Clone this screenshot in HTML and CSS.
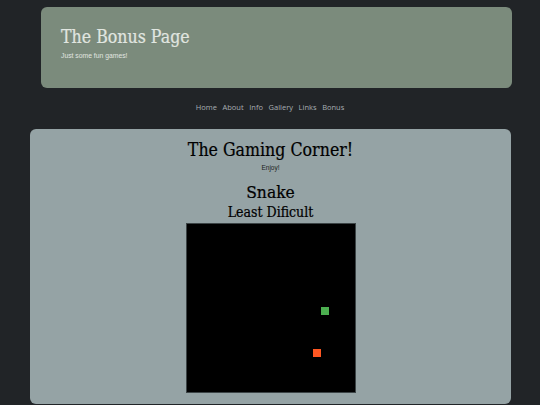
FILE: index.html
```html
<!DOCTYPE html>
<html>
<head>
<meta charset="utf-8">
<title>The Bonus Page</title>
<link rel="stylesheet" href="styles.css">
</head>
<body>
<header class="banner">
  <h1 class="banner-title">The Bonus Page</h1>
  <p class="banner-sub">Just some fun games!</p>
</header>
<nav class="nav">
  <a href="#">Home</a>
  <a href="#">About</a>
  <a href="#">Info</a>
  <a href="#">Gallery</a>
  <a href="#">Links</a>
  <a href="#">Bonus</a>
</nav>
<main class="card">
  <h2 class="card-title">The Gaming Corner!</h2>
  <p class="card-sub">Enjoy!</p>
  <h3 class="game-title">Snake</h3>
  <h4 class="game-level">Least Dificult</h4>
  <div class="board">
    <div class="cell snake" style="left:134px;top:83px"></div>
    <div class="cell food" style="left:126px;top:125px"></div>
  </div>
</main>
</body>
</html>
```
FILE: styles.css
```css
html, body {
  margin: 0;
  padding: 0;
  background: #212427;
  height: 405px;
  overflow: hidden;
}
body {
  font-family: "Liberation Sans", Arial, sans-serif;
}
.serif {
  font-family: "DejaVu Serif Condensed", "DejaVu Serif", serif;
}
.banner {
  box-sizing: border-box;
  margin: 7px 28px 0 41px;
  height: 81px;
  background: #7b8b7c;
  border-radius: 6px;
  padding: 19px 20px 0 20px;
}
.banner-title {
  margin: 0;
  font-family: "DejaVu Serif Condensed", "DejaVu Serif", serif;
  font-weight: normal;
  font-size: 17.6px;
  line-height: 22px;
  color: #e1e6e0;
  -webkit-text-stroke: 0.2px #e1e6e0;
}
.banner-sub {
  margin: 3px 0 0 0;
  font-size: 6.8px;
  line-height: 9px;
  color: #e1e6e0;
}
.nav {
  display: flex;
  justify-content: center;
  gap: 5.6px;
  margin-top: 12px;
  height: 14px;
  line-height: 14px;
  font-family: "Open Sans", "Noto Sans", sans-serif;
  font-size: 7.5px;
}
.nav a {
  color: #a7aeb2;
  text-decoration: none;
}
.card {
  box-sizing: border-box;
  margin: 15px 29px 0 30px;
  height: 275px;
  background: #95a3a5;
  border-radius: 6px;
  padding-top: 10px;
  display: flex;
  flex-direction: column;
  align-items: center;
  color: #000;
}
.card-title,
.game-title,
.game-level {
  font-family: "DejaVu Serif Condensed", "DejaVu Serif", serif;
  font-weight: normal;
  -webkit-text-stroke: 0.2px #000;
}
.card-title {
  margin: 0;
  font-size: 17.6px;
  line-height: 22px;
}
.card-sub {
  margin: 3px 0 0 0;
  font-size: 6.5px;
  line-height: 8px;
  color: #1c1f20;
}
.game-title {
  margin: 9px 0 0 0;
  font-size: 17.3px;
  line-height: 22px;
}
.game-level {
  margin: 0;
  font-size: 14px;
  line-height: 18px;
}
.board {
  position: relative;
  box-sizing: border-box;
  margin-top: 2px;
  width: 170px;
  height: 170px;
  background: #000;
  border: 1px solid #3c4446;
}
.cell {
  position: absolute;
  width: 8px;
  height: 8px;
}
.snake { background: #4caf50; }
.food { background: #ff5722; }
```
